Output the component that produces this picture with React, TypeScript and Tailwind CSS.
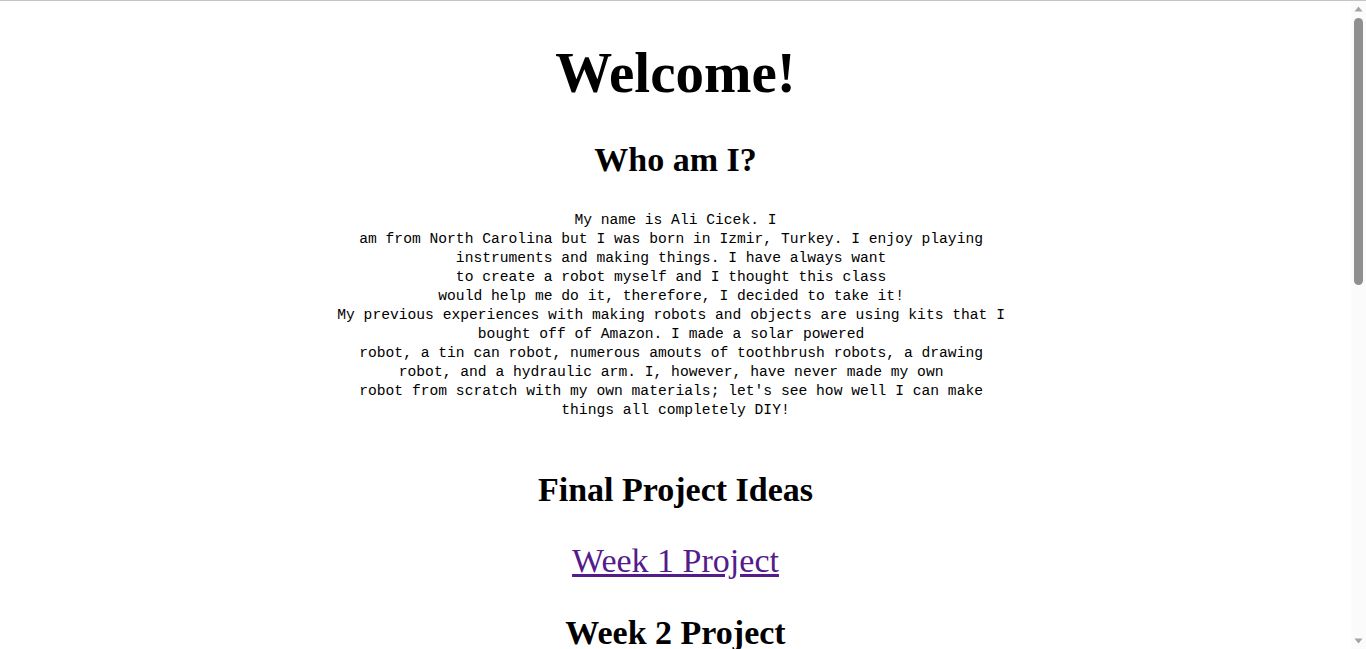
import React from "react";

const bio = [
  "My name is Ali Cicek. I",
  "am from North Carolina but I was born in Izmir, Turkey. I enjoy playing ",
  "instruments and making things. I have always want ",
  "to create a robot myself and I thought this class ",
  "would help me do it, therefore, I decided to take it! ",
  "My previous experiences with making robots and objects are using kits that I ",
  "bought off of Amazon. I made a solar powered ",
  "robot, a tin can robot, numerous amouts of toothbrush robots, a drawing ",
  "robot, and a hydraulic arm. I, however, have never made my own ",
  "robot from scratch with my own materials; let's see how well I can make ",
  "things all completely DIY!",
];

function Scrollbar() {
  return (
    <div className="fixed right-0 top-[1px] bottom-0 w-[15px] bg-[#fbfbfb] flex flex-col items-center">
      <svg width="15" height="15" viewBox="0 0 15 15" className="shrink-0">
        <polygon points="3.5,10.5 11.5,10.5 7.5,5.5" fill="#a3a3a3" />
      </svg>
      <div className="mt-[2px] w-[9px] h-[267px] rounded-[4.5px] bg-[#8f8f8f]" />
      <div className="flex-1" />
      <svg width="15" height="15" viewBox="0 0 15 15" className="shrink-0">
        <polygon points="3.5,4.5 11.5,4.5 7.5,9.5" fill="#a3a3a3" />
      </svg>
    </div>
  );
}

export default function App() {
  return (
    <div className="min-h-[1505px] bg-white border-t border-[#c4c4c4] pr-[15px] text-center text-black font-['Liberation_Serif',serif]">
      <h1 className="mt-[40px] text-[57px] leading-[64px] font-bold">Welcome!</h1>
      <h2 className="mt-[35px] text-[34px] leading-[40px] font-bold">Who am I?</h2>
      <div className="mt-[31px] font-['Liberation_Mono',monospace] text-[14.65px] leading-[19px]">
        {bio.map((line, i) => (
          <div key={i} className="whitespace-pre">
            {line}
          </div>
        ))}
      </div>
      <h2 className="mt-[50px] text-[34px] leading-[40px] font-bold">Final Project Ideas</h2>
      <div className="mt-[31px] text-[34px] leading-[40px]">
        <a href="#week1" className="text-[#551A8B] underline">
          Week 1 Project
        </a>
      </div>
      <h2 className="mt-[32px] text-[34px] leading-[40px] font-bold">Week 2 Project</h2>
      <Scrollbar />
    </div>
  );
}
